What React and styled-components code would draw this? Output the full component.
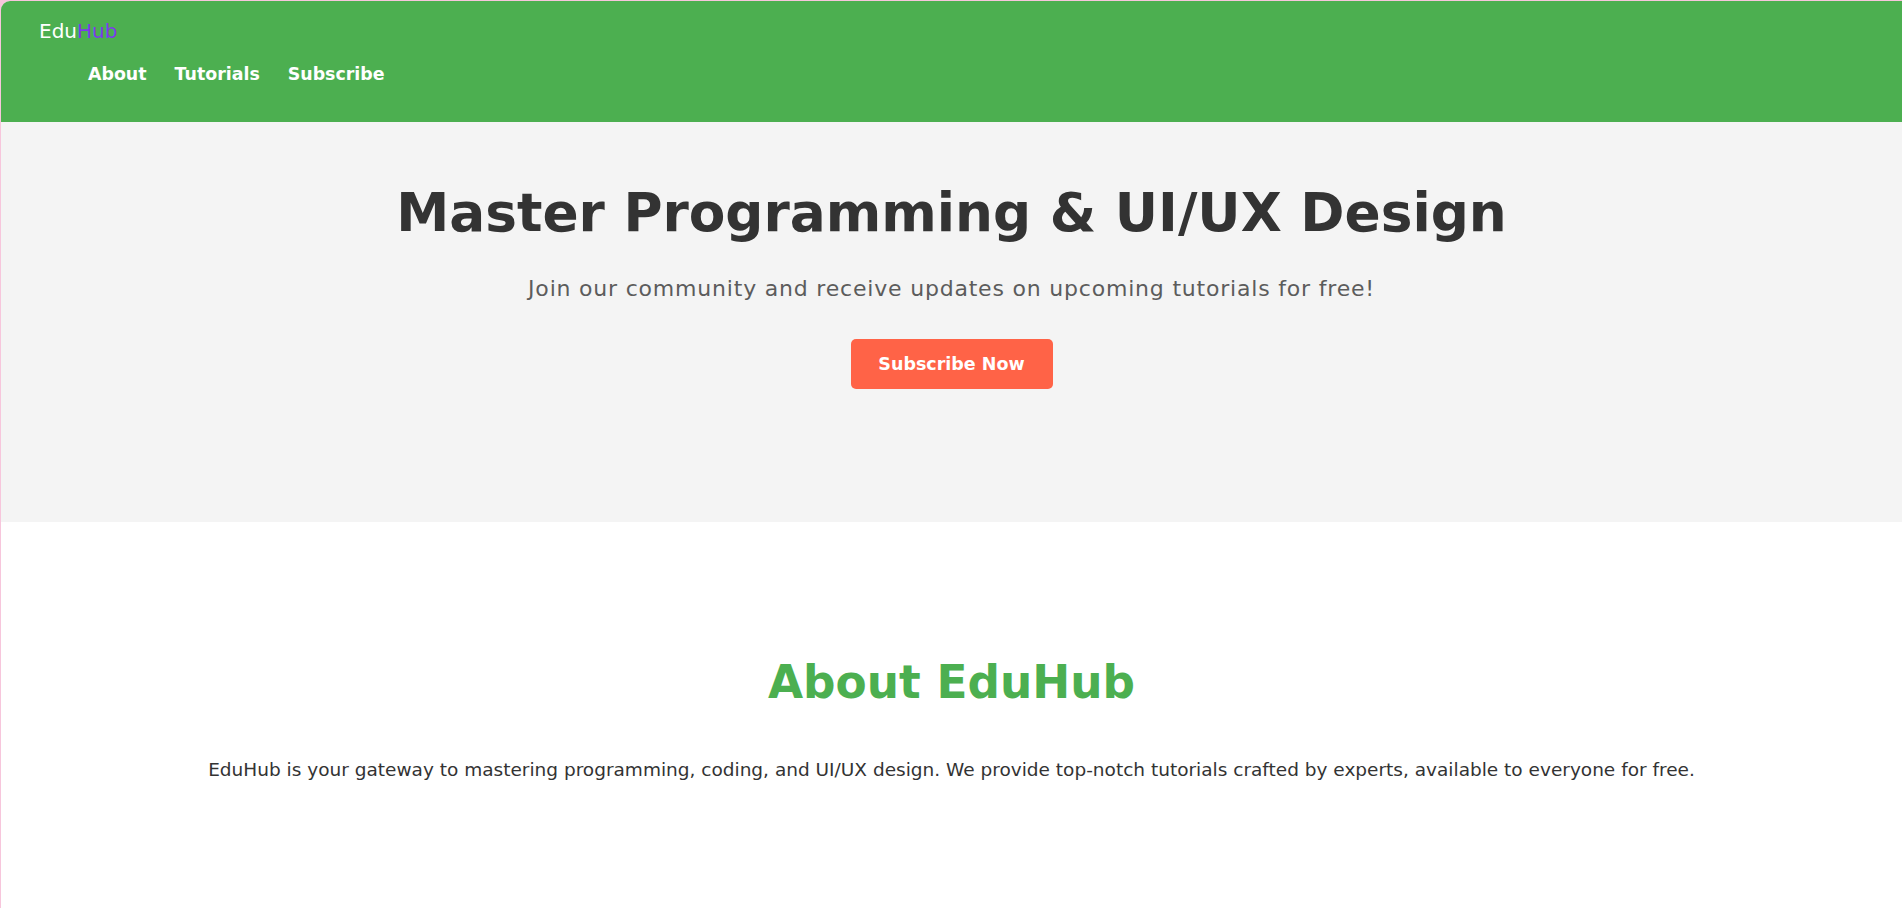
import React from "react";
import styled, { createGlobalStyle } from "styled-components";

const GlobalStyle = createGlobalStyle`
  html, body {
    margin: 0;
    padding: 0;
    background: #f7c6dc;
  }
  body {
    font-family: "DejaVu Sans", "Noto Sans", sans-serif;
  }
  #root {
    margin: 1px 0 0 1px;
    min-height: 907px;
    background: #fff;
    border-top-left-radius: 9px;
    overflow: hidden;
  }
`;

const Header = styled.header`
  background-color: #4caf50;
  color: white;
  padding: 18px 38px 36px;
`;

const Logo = styled.div`
  font-size: 20px;
  line-height: 24px;
  font-weight: 400;
  span {
    color: #7c3aed;
  }
`;

const Nav = styled.nav`
  display: flex;
  gap: 28px;
  margin: 19px 0 0 49px;
  a {
    color: white;
    text-decoration: none;
    font-weight: 700;
    font-size: 17.4px;
    line-height: 24px;
  }
`;

const Hero = styled.section`
  background-color: #f4f4f4;
  text-align: center;
  padding: 57px 20px 133px;
  h1 {
    margin: 0;
    font-size: 53.3px;
    line-height: 68px;
    font-weight: 700;
    color: #333;
  }
  p {
    margin: 28px 0 0;
    font-size: 22px;
    line-height: 28px;
    letter-spacing: 0.8px;
    font-weight: 400;
    color: #5c5c5c;
  }
`;

const Button = styled.button`
  margin-top: 36px;
  width: 202px;
  height: 50px;
  border: none;
  border-radius: 5px;
  background-color: #ff6347;
  color: white;
  font-family: inherit;
  font-size: 17.5px;
  font-weight: 700;
  cursor: pointer;
`;

const About = styled.section`
  text-align: center;
  padding: 132px 20px 80px;
  h2 {
    margin: 0;
    font-size: 45.4px;
    line-height: 58px;
    font-weight: 700;
    color: #4caf50;
  }
  p {
    margin: 45px 0 0;
    font-size: 18.5px;
    line-height: 26px;
    color: #333;
  }
`;

export default function App() {
  return (
    <>
      <GlobalStyle />
      <Header>
        <Logo>
          Edu<span>Hub</span>
        </Logo>
        <Nav>
          <a href="#about">About</a>
          <a href="#tutorials">Tutorials</a>
          <a href="#subscribe">Subscribe</a>
        </Nav>
      </Header>
      <Hero>
        <h1>Master Programming &amp; UI/UX Design</h1>
        <p>Join our community and receive updates on upcoming tutorials for free!</p>
        <Button>Subscribe Now</Button>
      </Hero>
      <About id="about">
        <h2>About EduHub</h2>
        <p>
          EduHub is your gateway to mastering programming, coding, and UI/UX design. We provide
          top-notch tutorials crafted by experts, available to everyone for free.
        </p>
      </About>
    </>
  );
}
